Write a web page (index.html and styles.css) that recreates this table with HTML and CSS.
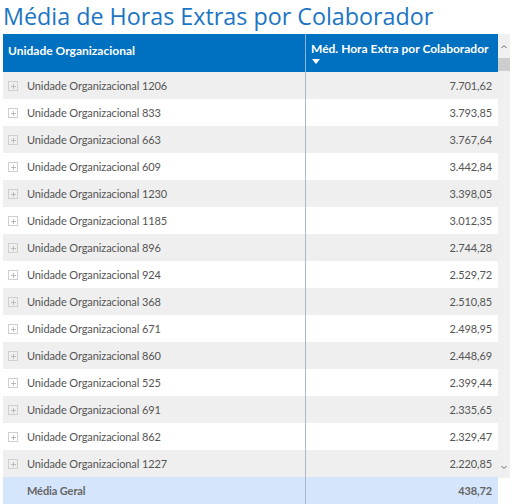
FILE: index.html
```html
<!DOCTYPE html>
<html lang="pt">

<head>
    <meta charset="UTF-8">
    <title>Média de Horas Extras por Colaborador</title>
    <link rel="stylesheet" href="styles.css">
</head>

<body>
    <h1 class="titulo">Média de Horas Extras por Colaborador</h1>
    <div class="grade">
        <div class="tabela">
            <div class="cabecalho">
                <div class="col-nome">Unidade Organizacional</div>
                <div class="col-valor">
                    <span>Méd. Hora Extra por Colaborador</span>
                    <span class="seta"></span>
                </div>
            </div>
            <div id="linhas"></div>
            <div class="linha total">
                <div class="col-nome">Média Geral</div>
                <div class="col-valor">438,72</div>
            </div>
        </div>
        <div class="rolagem">
            <svg class="btn-rolar" width="12" height="24" viewBox="0 0 12 24">
                <path d="M3.5 14 L6 11.5 L8.5 14" fill="none" stroke="#666" stroke-width="1"/>
            </svg>
            <span class="polegar"></span>
            <span class="trilho"></span>
            <svg class="btn-rolar" width="12" height="24" viewBox="0 0 12 24">
                <path d="M3.5 12 L6 14.5 L8.5 12" fill="none" stroke="#666" stroke-width="1"/>
            </svg>
        </div>
    </div>

    <script>
        let dados = [
            ["1206", "7.701,62"], ["833", "3.793,85"], ["663", "3.767,64"], ["609", "3.442,84"],
            ["1230", "3.398,05"], ["1185", "3.012,35"], ["896", "2.744,28"], ["924", "2.529,72"],
            ["368", "2.510,85"], ["671", "2.498,95"], ["860", "2.448,69"], ["525", "2.399,44"],
            ["691", "2.335,65"], ["862", "2.329,47"], ["1227", "2.220,85"]
        ];

        let html = "";
        for (let [id, valor] of dados) {
            html += `<div class="linha">
                <div class="col-nome"><span class="mais"></span>Unidade Organizacional ${id}</div>
                <div class="col-valor">${valor}</div>
            </div>`;
        }
        document.getElementById("linhas").innerHTML = html;
    </script>
</body>

</html>
```

FILE: styles.css
```css
body {
    margin: 0;
    padding: 0 3px;
    background-color: white;
    font-family: Lato, "Noto Sans", sans-serif;
}

.titulo {
    margin: 0;
    height: 34px;
    font-family: "Open Sans", "Noto Sans", sans-serif;
    font-size: 23.3px;
    font-weight: normal;
    line-height: 32px;
    color: #1c75c4;
    white-space: nowrap;
}

.grade {
    display: flex;
}

.tabela {
    width: 495px;
}

.cabecalho {
    display: flex;
    height: 38px;
    background-color: #0070c0;
    color: white;
    font-size: 12px;
    font-weight: bold;
    white-space: nowrap;
}

.cabecalho .col-nome {
    padding: 0 5px 6px;
    border-right: 1px solid #8db4de;
}

.cabecalho .col-valor {
    padding: 7px 5px 0;
    display: flex;
    flex-direction: column;
    align-items: flex-start;
}

.seta {
    margin: 3px 0 0 1px;
    border-left: 4px solid transparent;
    border-right: 4px solid transparent;
    border-top: 5px solid white;
}

.col-nome {
    width: 303px;
    box-sizing: border-box;
    display: flex;
    align-items: center;
}

.col-valor {
    flex: 1;
    box-sizing: border-box;
}

.linha {
    display: flex;
    height: 27px;
    font-size: 11px;
    letter-spacing: -0.1px;
    color: #555;
}

.linha:nth-child(odd) {
    background-color: #efefef;
}

.linha .col-nome {
    padding-left: 5px;
    border-right: 1px solid #a7b8cf;
}

.linha .col-valor {
    padding-right: 6px;
    text-align: right;
    line-height: 27px;
}

.mais {
    width: 8px;
    height: 8px;
    margin: 0 9px 0 0;
    border: 1px solid #cfcfcf;
    position: relative;
}

.mais::before,
.mais::after {
    content: "";
    position: absolute;
    background-color: #bbb;
}

.mais::before {
    left: 2px;
    top: 4px;
    width: 5px;
    height: 1px;
}

.mais::after {
    left: 4px;
    top: 2px;
    width: 1px;
    height: 5px;
}

.total {
    background-color: #d5e5fb !important;
    font-weight: bold;
    color: #666;
}

.total .col-nome {
    padding-left: 24px;
}

.rolagem {
    width: 12px;
    height: 444px;
    background-color: #f0f0f0;
    display: flex;
    flex-direction: column;
}

.polegar {
    height: 13px;
    background-color: #cdcdcd;
}

.trilho {
    flex: 1;
}
```
